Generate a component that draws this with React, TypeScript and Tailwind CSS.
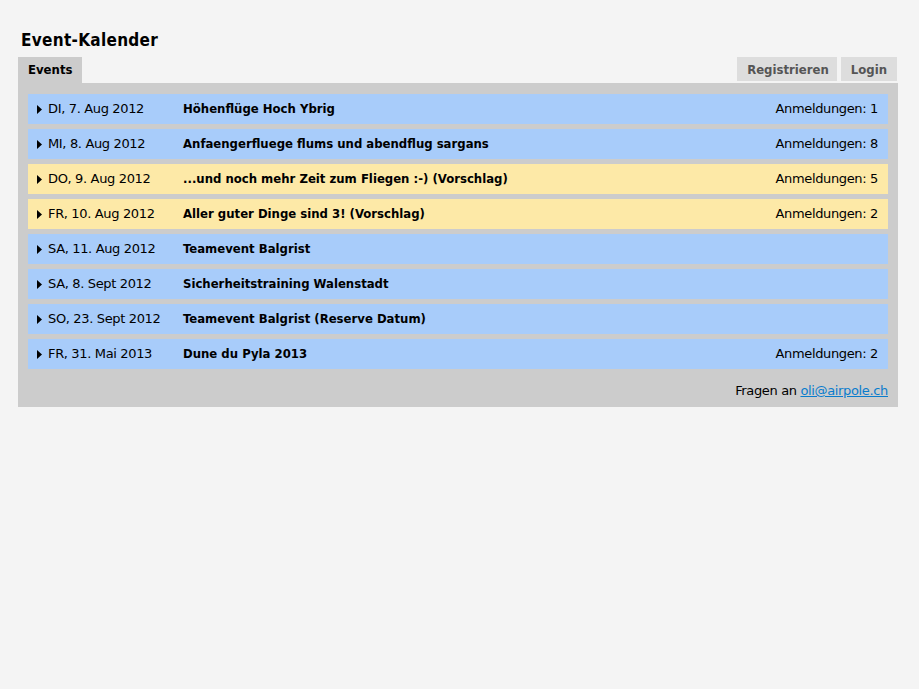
import React from 'react';

type EventRow = {
  date: string;
  title: string;
  count?: number;
  proposal?: boolean;
};

const EVENTS: EventRow[] = [
  { date: 'DI, 7. Aug 2012', title: 'Höhenflüge Hoch Ybrig', count: 1 },
  { date: 'MI, 8. Aug 2012', title: 'Anfaengerfluege flums und abendflug sargans', count: 8 },
  { date: 'DO, 9. Aug 2012', title: '...und noch mehr Zeit zum Fliegen :-) (Vorschlag)', count: 5, proposal: true },
  { date: 'FR, 10. Aug 2012', title: 'Aller guter Dinge sind 3! (Vorschlag)', count: 2, proposal: true },
  { date: 'SA, 11. Aug 2012', title: 'Teamevent Balgrist' },
  { date: 'SA, 8. Sept 2012', title: 'Sicherheitstraining Walenstadt' },
  { date: 'SO, 23. Sept 2012', title: 'Teamevent Balgrist (Reserve Datum)' },
  { date: 'FR, 31. Mai 2013', title: 'Dune du Pyla 2013', count: 2 },
];

// bold text in the original is Verdana Bold, narrower than DejaVu Sans Bold
const bold = "font-bold font-['DejaVu_Sans_Condensed','DejaVu_Sans',sans-serif]";

function Arrow() {
  return (
    <svg width="5" height="9" viewBox="0 0 5 9" className="mr-[6px] shrink-0">
      <path d="M0 0 L5 4.5 L0 9 Z" fill="#000" />
    </svg>
  );
}

export default function App() {
  return (
    <div className="min-h-[689px] bg-[#f4f4f4] px-[18px] pt-[30px] text-[13px] text-black tracking-[-0.35px] font-['DejaVu_Sans',Verdana,sans-serif]">
      <h1 className={`pl-[3px] text-[17px] leading-[20px] mb-[7px] tracking-[0.3px] ${bold}`}>Event-Kalender</h1>

      <div className="flex items-start justify-between w-[880px]">
        <div className={`bg-[#cccccc] h-[26px] px-[10px] flex items-center tracking-normal ${bold}`}>Events</div>
        <div className="flex gap-[4px] pr-[1px]">
          <div className={`bg-[#dddddd] h-[24px] pl-[10px] pr-[8px] pt-[1px] flex items-center text-[#555] tracking-normal ${bold}`}>Registrieren</div>
          <div className={`bg-[#dddddd] h-[24px] px-[10px] pt-[1px] flex items-center text-[#555] tracking-normal ${bold}`}>Login</div>
        </div>
      </div>

      <div className="w-[880px] bg-[#cccccc] px-[10px] pt-[11px] pb-[8px]">
        <div className="flex flex-col gap-[5px]">
          {EVENTS.map((e, i) => (
            <div
              key={i}
              className={`h-[30px] flex items-center pl-[9px] pr-[10px] ${e.proposal ? 'bg-[#fde9a7]' : 'bg-[#a8ccfa]'}`}
            >
              <Arrow />
              <span className="w-[135px] shrink-0">{e.date}</span>
              <span className={`flex-1 tracking-normal ${bold}`}>{e.title}</span>
              {e.count !== undefined && <span>Anmeldungen: {e.count}</span>}
            </div>
          ))}
        </div>
        <div className="text-right mt-[14px] leading-[16px]">
          Fragen an{' '}
          <a href="#" className="text-[#0a7ccc] underline">oli@airpole.ch</a>
        </div>
      </div>
    </div>
  );
}
